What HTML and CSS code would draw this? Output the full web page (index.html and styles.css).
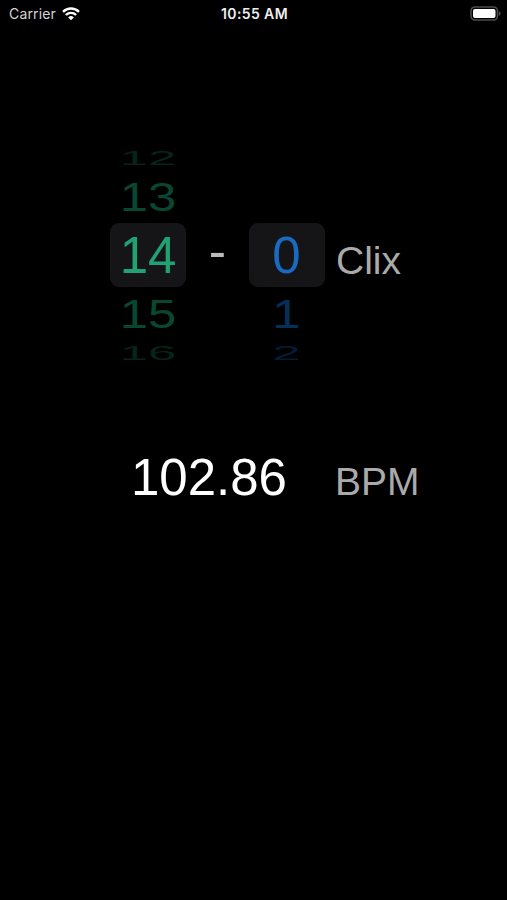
FILE: index.html
```html
<!doctype html>
<html lang="en">
<head>
    <meta charset="UTF-8" />
    <meta name="viewport" content="width=device-width, initial-scale=1.0" />
    <title>Clix</title>
    <link rel="stylesheet" href="styles.css">
</head>
<body>
    <header class="status-bar">
        <div class="carrier">
            <span>Carrier</span>
            <svg class="wifi" viewBox="0 0 18 14" width="18" height="14">
                <g fill="none" stroke="#fff" stroke-width="2.4">
                    <path d="M1 4.8 A11.5 11.5 0 0 1 17 4.8" />
                    <path d="M3.9 8 A7.3 7.3 0 0 1 14.1 8" />
                </g>
                <path d="M9 13.2 L6.2 10.4 A4 4 0 0 1 11.8 10.4 Z" fill="#fff" />
            </svg>
        </div>
        <div class="time">10:55 AM</div>
        <svg class="battery" viewBox="0 0 31 15" width="31" height="15">
            <rect x="1" y="1" width="26.5" height="13" rx="4" fill="none" stroke="#4c4c4c" stroke-width="1.6" />
            <rect x="3" y="3" width="22.5" height="9" rx="2" fill="#fff" />
            <path d="M28.8 5 Q30.6 6 30.6 7.5 Q30.6 9 28.8 10 Z" fill="#4c4c4c" />
        </svg>
    </header>

    <main>
        <section class="picker-row">
            <div class="picker green">
                <div class="item far"><span>12</span></div>
                <div class="item near"><span>13</span></div>
                <div class="item selected"><span>14</span></div>
                <div class="item near"><span>15</span></div>
                <div class="item far"><span>16</span></div>
            </div>
            <div class="dash">-</div>
            <div class="picker blue">
                <div class="item far"></div>
                <div class="item near"></div>
                <div class="item selected"><span>0</span></div>
                <div class="item near"><span>1</span></div>
                <div class="item far"><span>2</span></div>
            </div>
            <div class="unit clix">Clix</div>
        </section>

        <section class="bpm-row">
            <div class="bpm-value">102.86</div>
            <div class="unit">BPM</div>
        </section>
    </main>
</body>
</html>
```
FILE: styles.css
```css
body {
    margin: 0;
    height: 900px;
    background-color: #000;
    font-family: "Liberation Sans", Arial, sans-serif;
    overflow: hidden;
}

.status-bar {
    display: grid;
    grid-template-columns: 1fr auto 1fr;
    align-items: center;
    height: 27px;
    padding: 0 6px 0 8px;
    color: #d4d4d4;
    font-family: Inter, sans-serif;
    font-size: 14px;
}

.carrier {
    display: flex;
    align-items: center;
    gap: 6px;
    padding-left: 1px;
    letter-spacing: 0.15px;
}

.time {
    color: #eee;
    font-weight: 600;
    letter-spacing: 0.4px;
}

.battery {
    justify-self: end;
}

/* pickers */
.picker-row {
    display: grid;
    grid-template-columns: 76px 63px 76px auto;
    align-items: center;
    margin-top: 118px;
    padding-left: 110px;
}

.picker {
    display: flex;
    flex-direction: column;
    font-size: 51px;
}

.item {
    display: flex;
    align-items: center;
    justify-content: center;
}

.item span {
    line-height: 52px;
}

.selected {
    box-sizing: border-box;
    height: 64px;
    padding-top: 2px;
    border-radius: 9px;
    background-color: #151517;
}

.near {
    height: 53px;
}

.near span {
    transform: scaleY(0.81);
}

.far {
    height: 25px;
}

.far span {
    transform: scaleY(0.4);
}

.green .selected {
    color: #20a274;
}

.green .near {
    color: #084832;
}

.green .far {
    color: #05241a;
}

.blue .selected {
    color: #1a6ac0;
}

.blue .near {
    color: #053058;
}

.blue .far {
    color: #031c36;
}

.blue .item span {
    margin-right: 1px;
}

.dash {
    padding-bottom: 8px;
    color: #bbb;
    font-size: 52px;
    line-height: 1;
    text-align: center;
}

.unit {
    color: #aaa;
    font-size: 39px;
    line-height: 1;
}

.clix {
    padding: 11px 0 0 11px;
}

/* tempo */
.bpm-row {
    display: grid;
    grid-template-columns: 159px auto;
    column-gap: 46px;
    align-items: baseline;
    margin-top: 87px;
    padding-left: 128px;
}

.bpm-value {
    color: #fff;
    font-size: 51px;
    line-height: 1;
    text-align: right;
}

.bpm-row .unit {
    padding-left: 2px;
}
```
